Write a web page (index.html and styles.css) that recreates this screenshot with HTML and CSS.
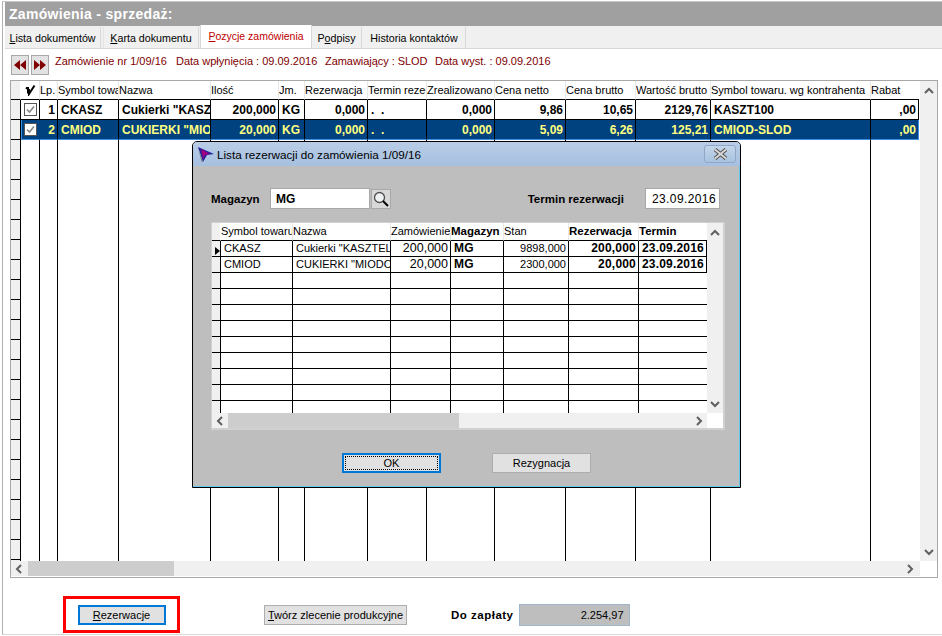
FILE: index.html
```html
<!DOCTYPE html>
<html lang="pl">
<head>
<meta charset="utf-8">
<title>Zamówienia - sprzedaż</title>
<link rel="stylesheet" href="styles.css">
</head>
<body>
<div class="app">
  <div class="title">Zamówienia - sprzedaż:</div>
  <div class="tabs">
    <div class="tab t1"><u>L</u>ista dokumentów</div>
    <div class="tab t2"><u>K</u>arta dokumentu</div>
    <div class="tab t3 active"><u>P</u>ozycje zamówienia</div>
    <div class="tab t4">P<u>o</u>dpisy</div>
    <div class="tab t5">Historia kontaktów</div>
  </div>
  <div class="toolbar">
    <button class="nav"><svg width="14" height="12" viewBox="0 0 14 12"><path d="M7 1v10L1 6zM13 1v10L7 6z" fill="#800000"/></svg></button>
    <button class="nav"><svg width="14" height="12" viewBox="0 0 14 12"><path d="M1 1v10l6-5zM7 1v10l6-5z" fill="#800000"/></svg></button>
    <span class="info i1">Zamówienie nr 1/09/16</span>
    <span class="info i2">Data wpłynięcia : 09.09.2016</span>
    <span class="info i3">Zamawiający : SLOD</span>
    <span class="info">Data wyst. : 09.09.2016</span>
  </div>
  <div class="frame">
    <div class="frame-main">
      <table class="grid main">
        <colgroup><col class="m0"><col class="m1"><col class="m2"><col class="m3"><col class="m4"><col class="m5"><col class="m6"><col class="m7"><col class="m8"><col class="m9"><col class="m10"><col class="m11"><col class="m12"><col class="m13"><col class="m14"></colgroup>
        <tr class="head">
          <th class="ind"></th>
          <th class="chk-h"><svg width="12" height="12" viewBox="0 0 12 12"><path d="M2 3.500l3 2.500v4L10.500 1.500M4 3v6.500" fill="none" stroke="#000" stroke-width="2"/></svg></th>
          <th>Lp.</th><th>Symbol towaru</th><th>Nazwa</th><th>Ilość</th><th>Jm.</th><th>Rezerwacja</th><th>Termin rezerw</th><th>Zrealizowano</th><th>Cena netto</th><th>Cena brutto</th><th>Wartość brutto</th><th>Symbol towaru. wg kontrahenta</th><th class="last">Rabat</th>
        </tr>
        <tr class="row">
          <td class="ind"></td>
          <td class="chk"><span class="box"><svg width="11" height="11" viewBox="0 0 11 11"><path d="M2 5.500l2.500 2.500L9 2.500" fill="none" stroke="#888" stroke-width="1.600"/></svg></span></td>
          <td class="r">1</td><td class="in">CKASZ</td><td class="in">Cukierki "KASZTELAN"</td><td class="r">200,000</td><td class="in">KG</td><td class="r">0,000</td><td class="in">.&nbsp;&nbsp;.</td><td class="r">0,000</td><td class="r">9,86</td><td class="r">10,65</td><td class="r">2129,76</td><td class="in">KASZT100</td><td class="r last">,00</td>
        </tr>
        <tr class="row sel">
          <td class="ind"></td>
          <td class="chk"><span class="box"><svg width="11" height="11" viewBox="0 0 11 11"><path d="M2 5.500l2.500 2.500L9 2.500" fill="none" stroke="#888" stroke-width="1.600"/></svg></span></td>
          <td class="r">2</td><td class="in">CMIOD</td><td class="in">CUKIERKI "MIODOWE"</td><td class="r">20,000</td><td class="in">KG</td><td class="r">0,000</td><td class="in">.&nbsp;&nbsp;.</td><td class="r">0,000</td><td class="r">5,09</td><td class="r">6,26</td><td class="r">125,21</td><td class="in">CMIOD-SLOD</td><td class="r last">,00</td>
        </tr>
        <tr class="fill">
          <td class="ind"></td><td></td><td></td><td></td><td></td><td></td><td></td><td></td><td></td><td></td><td></td><td></td><td></td><td></td><td class="last"></td>
        </tr>
      </table>
      <div class="vscroll">
        <svg class="arrow" width="10" height="8" viewBox="0 0 10 8"><path d="M1 6l4-4 4 4" fill="none" stroke="#606060" stroke-width="2"/></svg>
        <svg class="arrow" width="10" height="8" viewBox="0 0 10 8"><path d="M1 2l4 4 4-4" fill="none" stroke="#606060" stroke-width="2"/></svg>
      </div>
    </div>
    <div class="hrow">
      <div class="hscroll">
        <svg class="arrow-h" width="8" height="10" viewBox="0 0 8 10"><path d="M6 1L2 5l4 4" fill="none" stroke="#606060" stroke-width="2"/></svg>
        <div class="thumb main-thumb"></div>
        <svg class="arrow-h end" width="8" height="10" viewBox="0 0 8 10"><path d="M2 1l4 4-4 4" fill="none" stroke="#606060" stroke-width="2"/></svg>
      </div>
    </div>
  </div>
  <div class="footer">
    <div class="redbox"><button class="btn focused rez"><u>R</u>ezerwacje</button></div>
    <button class="btn tworz"><u>T</u>wórz zlecenie produkcyjne</button>
    <span class="bold-label">Do zapłaty</span>
    <div class="sum">2.254,97</div>
  </div>
</div>

<div class="dialog">
  <div class="dlg-title">
    <svg class="dlg-icon" width="18" height="17" viewBox="0 0 18 17"><path d="M1 1l16 7-7 1-4 7z" fill="#2020a0"/><path d="M1 1l5 15-1.500 0z" fill="#808080"/><path d="M4 3l9 5-5 1-2 4z" fill="#a00080"/></svg>
    <span class="dlg-text">Lista rezerwacji do zamówienia 1/09/16</span>
    <div class="close"><svg width="17" height="12" viewBox="0 0 17 12"><path d="M3 1.500l11 9M14 1.500l-11 9" stroke="#555" stroke-width="4"/><path d="M3 1.500l11 9M14 1.500l-11 9" stroke="#d8d8d8" stroke-width="2"/></svg></div>
  </div>
  <div class="dlg-body">
    <div class="form">
      <span class="bold-label mag">Magazyn</span>
      <div class="field mg">MG</div>
      <button class="search"><svg width="18" height="18" viewBox="0 0 18 18"><circle cx="7.500" cy="7.500" r="5" fill="#eef2f2" stroke="#505050" stroke-width="1.300"/><path d="M11 11l5 5" stroke="#000" stroke-width="2"/></svg></button>
      <span class="bold-label term">Termin rezerwacji</span>
      <div class="field date">23.09.2016</div>
    </div>
    <div class="frame dframe">
      <div class="frame-main">
        <table class="grid sub">
          <colgroup><col class="s0"><col class="s1"><col class="s2"><col class="s3"><col class="s4"><col class="s5"><col class="s6"><col class="s7"></colgroup>
          <tr class="head">
            <th class="ind"></th><th>Symbol towaru</th><th>Nazwa</th><th>Zamówienie</th><th class="b">Magazyn</th><th>Stan</th><th class="b">Rezerwacja</th><th class="b last">Termin</th>
          </tr>
          <tr class="row">
            <td class="ind"><svg class="ptr" width="5" height="8" viewBox="0 0 5 8"><path d="M0 0l5 4-5 4z"/></svg></td>
            <td class="in">CKASZ</td><td class="in">Cukierki "KASZTELAN"</td><td class="r big">200,000</td><td class="in b">MG</td><td class="r">9898,000</td><td class="r b">200,000</td><td class="r b last">23.09.2016</td>
          </tr>
          <tr class="row">
            <td class="ind"></td>
            <td class="in">CMIOD</td><td class="in">CUKIERKI "MIODOWE"</td><td class="r big">20,000</td><td class="in b">MG</td><td class="r">2300,000</td><td class="r b">20,000</td><td class="r b last">23.09.2016</td>
          </tr>
          <tr class="fill">
            <td class="ind"></td><td></td><td></td><td></td><td></td><td></td><td></td><td class="last"></td>
          </tr>
        </table>
        <div class="vscroll">
          <svg class="arrow" width="10" height="8" viewBox="0 0 10 8"><path d="M1 6l4-4 4 4" fill="none" stroke="#606060" stroke-width="2"/></svg>
          <svg class="arrow" width="10" height="8" viewBox="0 0 10 8"><path d="M1 2l4 4 4-4" fill="none" stroke="#606060" stroke-width="2"/></svg>
        </div>
      </div>
      <div class="hrow">
        <div class="hscroll">
          <svg class="arrow-h" width="8" height="10" viewBox="0 0 8 10"><path d="M6 1L2 5l4 4" fill="none" stroke="#606060" stroke-width="2"/></svg>
          <div class="thumb sub-thumb"></div>
          <svg class="arrow-h end" width="8" height="10" viewBox="0 0 8 10"><path d="M2 1l4 4-4 4" fill="none" stroke="#606060" stroke-width="2"/></svg>
        </div>
      </div>
    </div>
    <div class="dlg-buttons">
      <button class="btn focused ok"><span class="dots">OK</span></button>
      <button class="btn rezyg">Rezygnacja</button>
    </div>
  </div>
</div>
</body>
</html>
```
FILE: styles.css
```css
* { box-sizing: border-box; }
html, body { margin: 0; padding: 0; }
body {
  width: 942px; height: 636px; overflow: hidden; position: relative; background: #fff;
  font: 11px "Liberation Sans", Arial, sans-serif; color: #000;
}
u { text-decoration: underline; }

.app {
  margin: 1px 0 0 2px; width: 940px; height: 634px; padding-left: 2px; padding-top: 0;
  border-left: 1px solid #b0b0b0; border-top: 1px solid #c8c8c8; border-bottom: 1px solid #d8d8d8;
  display: flex; flex-direction: column;
}
.title {
  height: 24px; flex: none; background: #a0a0a0; color: #fff; padding-left: 4px;
  font: bold 14px/25px "Liberation Sans", sans-serif; letter-spacing: .3px;
}
.tabs {
  height: 23px; flex: none; display: flex; background: #f0f0f0; border-bottom: 1px solid #d8d8d8;
}
.tab {
  height: 21px; margin-top: 1px; border-right: 1px solid #d8d8d8; text-align: center;
  font-size: 10.700px; line-height: 22px; white-space: nowrap;
}
.t1 { width: 96px; }
.t2 { width: 96px; margin-left: 2px; border-left: 1px solid #e4e4e4; }
.t3 { width: 112px; margin-left: 1px; }
.t4 { width: 50px; margin-left: 0; }
.t5 { width: 103px; margin-left: 1px; }
.tab.active { background: #fff; color: #c00000; height: 23px; margin-top: -1px; border-left: 1px solid #d8d8d8; line-height: 22px; font-size: 10.500px; }

.toolbar { height: 31px; flex: none; display: flex; align-items: center; padding: 0 0 6px 6px; }
.nav {
  width: 18px; height: 20px; padding: 0; margin: 6px 2px 0 0; background: #e2e2e2; border: 1px solid #a8a8a8;
  display: flex; align-items: center; justify-content: center;
}
.info { color: #800000; font-size: 11px; margin-top: -1px; white-space: nowrap; }
.i1 { margin-left: 4px; width: 121px; }
.i2 { width: 149px; }
.i3 { width: 110px; letter-spacing: -.05px; }

.frame {
  margin-left: 5px; width: 928px; height: 498px; flex: none; border: 1px solid #a8a8a8; background: #fff;
  display: flex; flex-direction: column; overflow: hidden;
}
.frame-main { display: flex; flex: 1; min-height: 0; }
.grid { table-layout: fixed; border-collapse: separate; border-spacing: 0; flex: none; align-self: flex-start; }
.main { width: 908px; }
.sub { width: 495px; }
.m0 { width: 10px; } .m1 { width: 19px; } .m2 { width: 18px; } .m3 { width: 61px; } .m4 { width: 92px; }
.m5 { width: 68px; } .m6 { width: 26px; } .m7 { width: 63px; } .m8 { width: 59px; } .m9 { width: 68px; }
.m10 { width: 71px; } .m11 { width: 70px; } .m12 { width: 75px; } .m13 { width: 160px; } .m14 { width: 48px; }
.s0 { width: 9px; } .s1 { width: 72px; } .s2 { width: 98px; } .s3 { width: 60px; } .s4 { width: 53px; }
.s5 { width: 65px; } .s6 { width: 70px; } .s7 { width: 68px; }

.grid th, .grid td { padding: 0; overflow: hidden; white-space: nowrap; }
.grid th {
  height: 19px; font-weight: normal; text-align: left; font-size: 11px; padding-left: 0;
  border-right: 1px solid #e8e8e8; border-bottom: 1px solid #000; background: #fff;
}
.main .row td {
  height: 20px; font-weight: bold; font-size: 12px; border-right: 1px solid #000; border-bottom: 1px solid #000;
}
.grid .r { text-align: right; padding-right: 2px; }
.grid .in { padding-left: 3px; }
.grid th.ind, .grid td.ind { background: #f0f0f0; border-right: 1px solid #000; border-bottom: 1px solid #000; padding: 0; }
.grid th.ind { border-right-color: #fff; }
.grid .last { border-right: none; }
.chk { text-align: center; }
.chk-h { text-align: center; }
.chk-h svg { display: block; margin: 0 auto; }
.box {
  display: block; width: 13px; height: 13px; margin: 0 auto; border: 1px solid #555; background: #fff;
}
.box svg { display: block; }
.main .sel td { background: #00417f; color: #ffff80; border-bottom-color: #3a8fe0; }
.main .sel td.ind { background: #f0f0f0; border-bottom-color: #000; }
.main .sel td.last { border-right: 1px solid #3a8fe0; }
.main .sel td:nth-child(2) { border-left: 1px solid #3a8fe0; border-right-color: #00417f; }
.main .sel td:nth-child(2) .box { margin-left: 2px; }
.fill td { height: 421px; border-right: 1px solid #000; background: #fff; }
.main .fill td.ind {
  border-bottom: none;
  background: repeating-linear-gradient(to bottom, #f0f0f0 0, #f0f0f0 19px, #000 19px, #000 20px);
}
.sub .row td { height: 16px; font-size: 11px; border-right: 1px solid #000; border-bottom: 1px solid #000; line-height: 15px; }
.sub th { height: 18px; border-right-color: #e8e8e8; padding-bottom: 2px; }
.sub .b { font-weight: bold; }
.sub .row td.b { font-size: 12px; letter-spacing: .2px; }
.sub .row td.big { font-size: 12.500px; }
.sub th.b { font-size: 11.500px; }
.sub .fill td {
  height: 140px; border-bottom: none;
  background: repeating-linear-gradient(to bottom, #fff 0, #fff 15px, #000 15px, #000 16px);
}
.sub .fill td.ind { background: repeating-linear-gradient(to bottom, #f0f0f0 0, #f0f0f0 15px, #000 15px, #000 16px); }
.ptr { display: block; margin: 4px 0 0 3px; }

.vscroll {
  width: 18px; margin-left: 1px; background: #f0f0f0; display: flex; flex-direction: column; justify-content: space-between;
  align-items: center; padding: 6px 0 5px;
}
.arrow { display: block; }
.hrow { height: 16px; flex: none; display: flex; }
.hscroll { width: 909px; background: #f0f0f0; display: flex; align-items: center; padding-left: 4px; height: 15px; }
.arrow-h { display: block; flex: none; }
.arrow-h.end { margin-left: auto; margin-right: 6px; }
.thumb { height: 15px; background: #cdcdcd; flex: none; margin-left: 5px; }
.main-thumb { width: 146px; }

.footer { flex: 1; display: flex; align-items: center; padding: 18px 0 1px 58px; }
.redbox {
  width: 117px; height: 37px; border: 3px solid #f00; display: flex; align-items: center; justify-content: center;
}
.btn {
  font: 11px "Liberation Sans", sans-serif; color: #000; background: #e1e1e1; border: 1px solid #adadad; height: 20px; padding: 0;
}
.btn.focused { border: 2px solid #0078d7; }
.rez { width: 88px; }
.tworz { width: 143px; margin-left: 84px; }
.bold-label { font: bold 11.500px "Liberation Sans", sans-serif; white-space: nowrap; }
.footer .bold-label { margin-left: 44px; letter-spacing: .5px; }
.sum {
  width: 111px; height: 22px; margin-left: 5px; background: #bebebe; border: 1px solid #a0b4cc; text-align: right; line-height: 20px; padding-right: 5px; font-size: 11px;
}

.dialog {
  position: absolute; left: 192px; top: 141px; width: 549px; height: 347px;
  border: 1px solid #000; border-radius: 5px 5px 0 0; background: #bebebe; box-shadow: inset -1px -1px 0 #62c8ee;
  overflow: hidden;
}
.dlg-title {
  height: 24px; background: linear-gradient(to bottom, #b9cde6, #a6c0e0); display: flex; align-items: center;
  padding: 0 4px;
}
.dlg-icon { flex: none; display: block; }
.dlg-text { margin-left: 2px; font-size: 11.700px; }
.close {
  margin-left: auto; width: 32px; height: 18px; border: 1px solid #8fa8c8; border-radius: 3px; display: flex; align-items: center; justify-content: center;
  background: linear-gradient(to bottom, #c4d6ea, #a8c2e0);
}
.close svg { display: block; }
.dlg-body { padding: 22px 0 0 18px; }
.form { display: flex; align-items: center; height: 21px; width: 509px; }
.mag { width: 59px; flex: none; }
.field { height: 21px; background: #fff; border: 1px solid #a8a8a8; flex: none; }
.mg { width: 100px; font-weight: bold; font-size: 12px; padding-left: 5px; line-height: 20px; }
.search { width: 20px; height: 20px; margin-left: 1px; padding: 0; background: #d8d8d8; border: 1px solid #a8a8a8; display: flex; align-items: center; justify-content: center; }
.search svg { display: block; }
.term { margin-left: auto; margin-right: 21px; }
.date { width: 75px; font-size: 12px; letter-spacing: .4px; text-align: right; padding-right: 3px; line-height: 20px; }
.dframe { margin: 13px 0 0; width: 514px; height: 208px; border-color: #d0d0d0; border-width: 1px 2px 2px 1px; }
.dframe .vscroll { width: 16px; margin-left: 0; }
.dframe .hrow { height: 15px; }
.dframe .hscroll { width: 495px; padding-left: 4px; }
.dframe .thumb { margin-left: 4px; }
.sub-thumb { width: 231px; }
.dframe .arrow-h.end { margin-right: 4px; }
.dlg-buttons { display: flex; justify-content: center; gap: 51px; margin-top: 23px; width: 511px; }
.ok, .rezyg { width: 99px; height: 20px; }
.dots { display: block; margin: 1px; border: 1px dotted #000; height: 14px; line-height: 12px; }
```
